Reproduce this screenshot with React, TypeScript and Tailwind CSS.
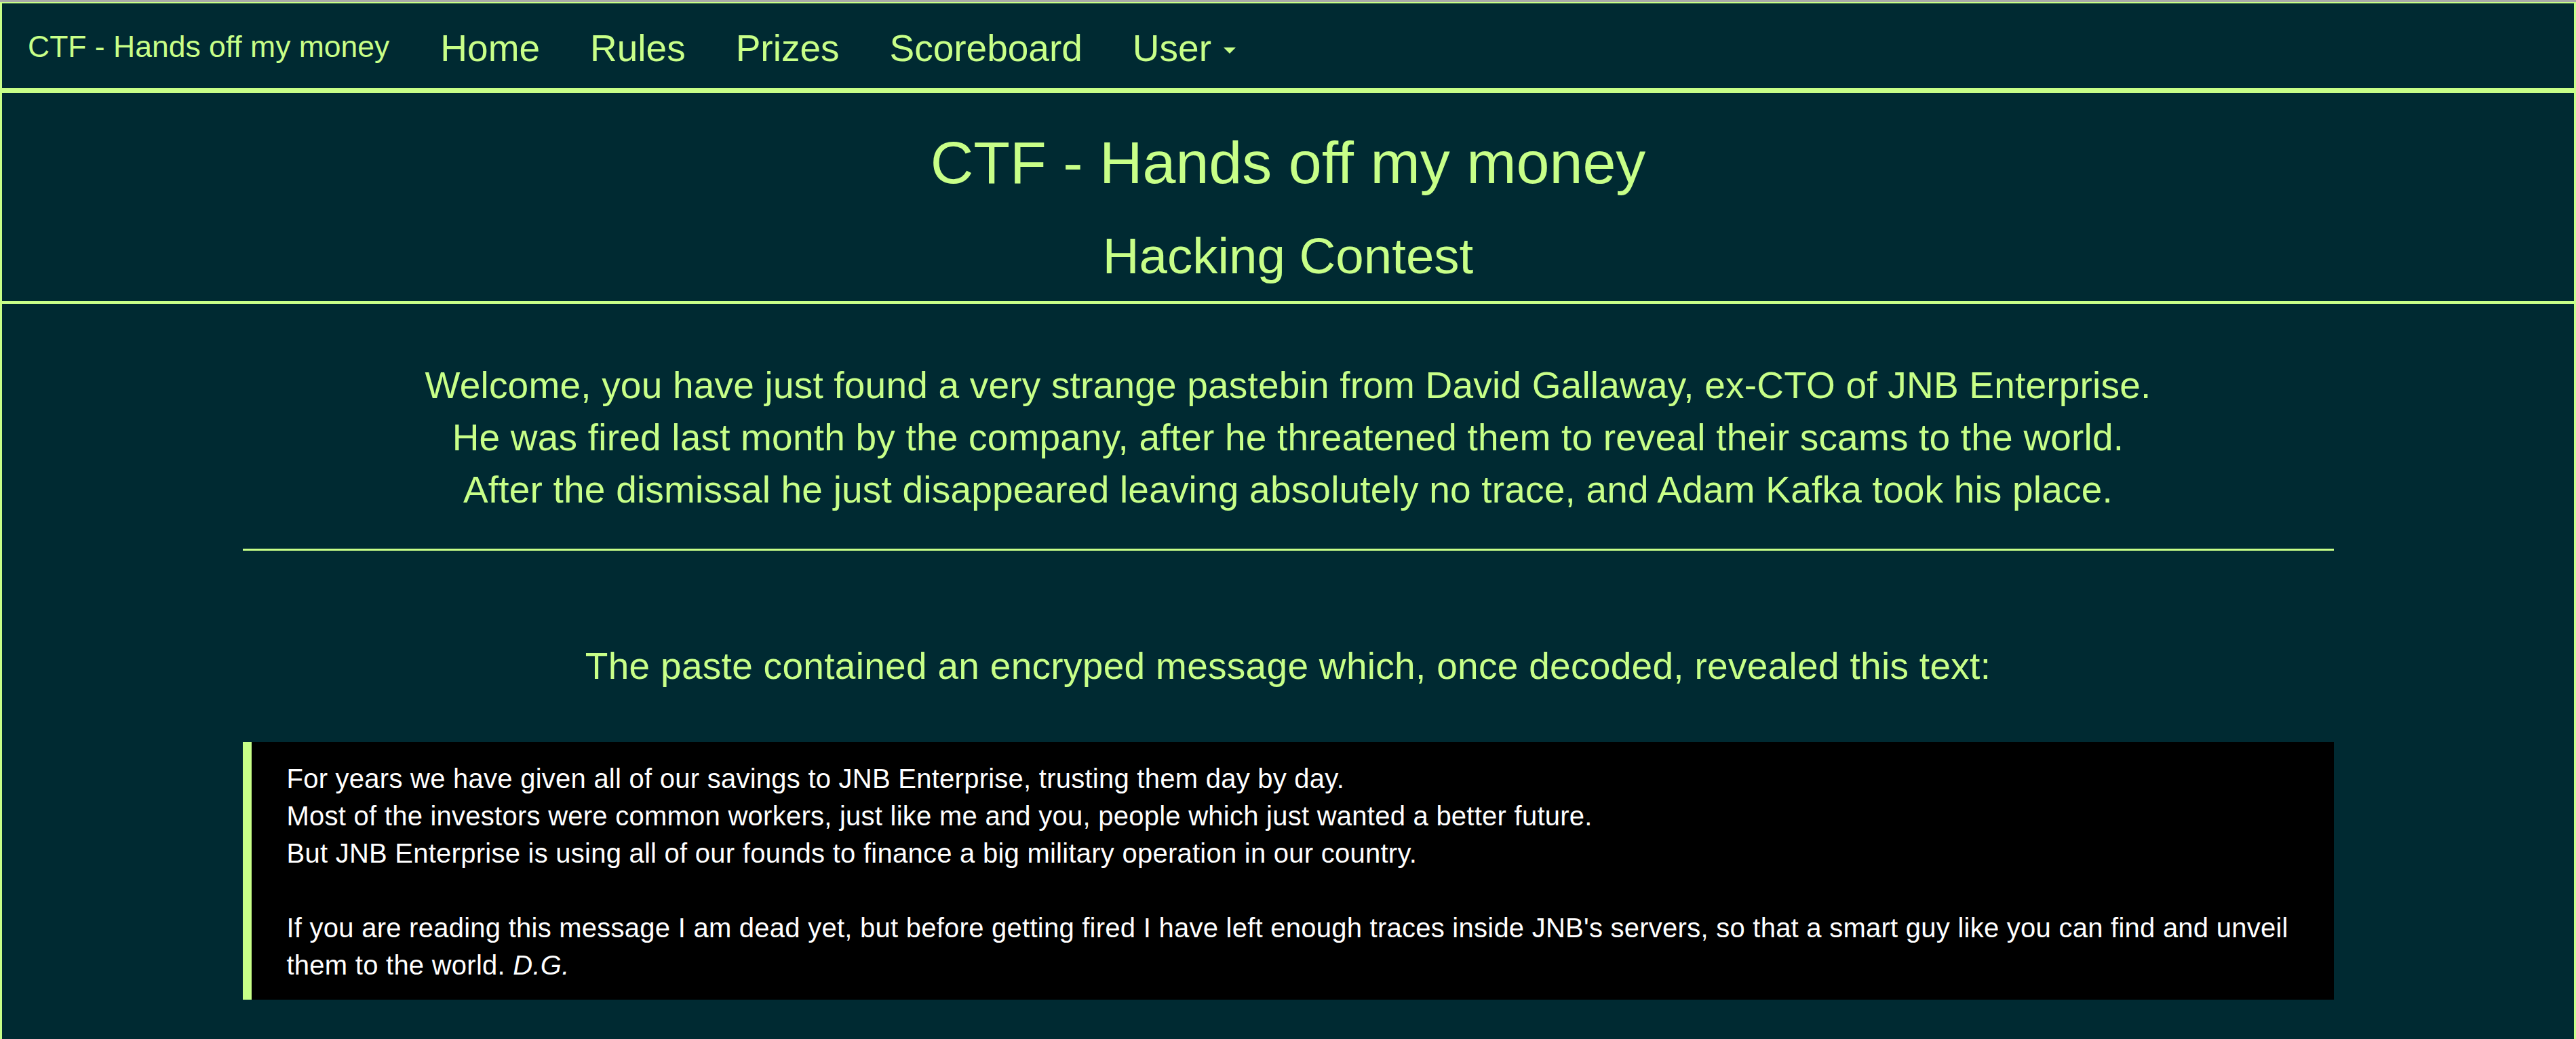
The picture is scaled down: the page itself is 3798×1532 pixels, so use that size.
import React from 'react';

const navLinks = ['Home', 'Rules', 'Prizes', 'Scoreboard'];

const NavBar: React.FC = () => {
    return (
        <nav className="h-[130px] border-t-2 border-b-[3px] border-[#c8ff88] flex items-center pl-[38px] pt-[4px]">
            <a className="text-[44.5px] text-[#c8ff88] leading-none mr-[75px]">CTF - Hands off my money</a>
            <div className="flex items-center gap-[74px] text-[55px] leading-none text-[#c8ff88] pt-[4px]">
                {navLinks.map(link => (
                    <a key={link}>{link}</a>
                ))}
                <a className="flex items-center gap-[18px]">
                    User
                    {/* dropdown caret */}
                    <span className="w-0 h-0 border-x-[9px] border-x-transparent border-t-[9px] border-t-[#c8ff88] mt-[6px]" />
                </a>
            </div>
        </nav>
    );
};

export default function App() {
    return (
        <div className="min-h-screen bg-[#002a32] font-['Liberation_Sans','Noto_Sans',sans-serif]">
            <div className="h-[3px] bg-[#a9a9a9]" />
            <div className="border-x-[3px] border-[#c8ff88] min-h-[1529px]">
                <NavBar />

                {/* page header */}
                <header className="border-t-[4px] border-b-[4px] border-[#c8ff88] text-center text-[#c8ff88] pt-[55px] pb-[25px]">
                    <h1 className="text-[88px] leading-[1.1]">CTF - Hands off my money</h1>
                    <h2 className="text-[74.5px] leading-[1.1] mt-[48px]">Hacking Contest</h2>
                </header>

                <main className="w-[3083px] mx-auto pt-[82px]">
                    <p className="text-center text-[55px] tracking-[0.2px] leading-[77px] text-[#c8ff88]">
                        Welcome, you have just found a very strange pastebin from David Gallaway, ex-CTO of JNB Enterprise.<br />
                        He was fired last month by the company, after he threatened them to reveal their scams to the world.<br />
                        After the dismissal he just disappeared leaving absolutely no trace, and Adam Kafka took his place.
                    </p>

                    <hr className="mt-[48px] border-0 h-[3px] bg-[#c8ff88]" />

                    <p className="mt-[132px] text-center text-[55px] tracking-[0.3px] leading-[77px] text-[#c8ff88]">
                        The paste contained an encryped message which, once decoded, revealed this text:
                    </p>

                    <blockquote className="mt-[73px] bg-black border-l-[13px] border-[#c8ff88] pl-[52px] pr-[20px] pt-[27px] pb-[23px] text-white text-[40px] tracking-[0.25px] leading-[55px]">
                        For years we have given all of our savings to JNB Enterprise, trusting them day by day.<br />
                        Most of the investors were common workers, just like me and you, people which just wanted a better future.<br />
                        But JNB Enterprise is using all of our founds to finance a big military operation in our country.<br />
                        <br />
                        <span className="whitespace-nowrap">If you are reading this message I am dead yet, but before getting fired I have left enough traces inside JNB's servers, so that a smart guy like you can find and unveil</span><br />
                        them to the world. <em>D.G.</em>
                    </blockquote>
                </main>
            </div>
        </div>
    );
}
